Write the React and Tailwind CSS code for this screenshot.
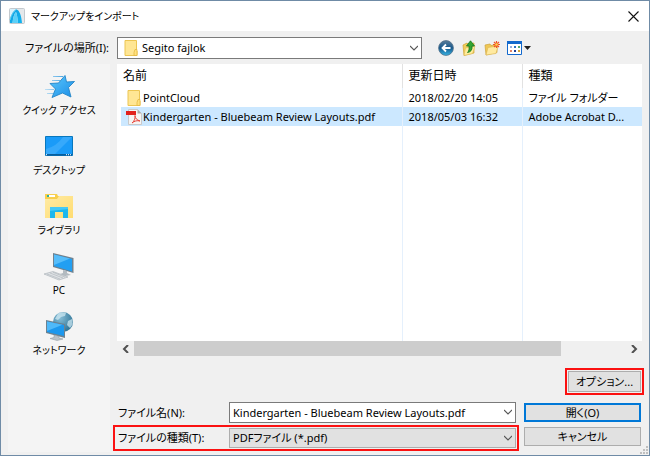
import { useState } from "react";

const files = [
  { id: 1, name: "PointCloud", date: "2018/02/20 14:05", type: "ファイル フォルダー", icon: FolderIcon },
  {
    id: 2,
    name: "Kindergarten - Bluebeam Review Layouts.pdf",
    date: "2018/05/03 16:32",
    type: "Adobe Acrobat D...",
    icon: PdfIcon,
  },
];

const places = [
  { label: "クイック アクセス", icon: StarIcon },
  { label: "デスクトップ", icon: DesktopIcon },
  { label: "ライブラリ", icon: LibraryIcon },
  { label: "PC", icon: PcIcon },
  { label: "ネットワーク", icon: NetworkIcon },
];

function AppLogo() {
  return (
    <svg className="w-4 h-4" viewBox="0 0 16 16">
      <defs>
        <linearGradient id="logo" x1="0" x2="1" y1="0" y2="1">
          <stop offset="0" stopColor="#0f9fe0" />
          <stop offset="1" stopColor="#12b4f0" />
        </linearGradient>
      </defs>
      <rect x=".5" y=".5" width="15" height="15" rx="1" fill="#e4e8eb" stroke="#c3c9ce" />
      <path d="M1 1h7C4 3 2 7 1 10z" fill="#d9f1fb" />
      <path d="M1 15V11C2.500 6 5 2 7.500 1.500 10.500 2 12.500 8 13 15H9C8.500 10 8 6 7 4 5 6 4 10 3.500 15z" fill="url(#logo)" />
      <path d="M3.500 15C4 10 5 6 7 4 8 6 8.500 10 9 15z" fill="#5bd0f8" />
      <path d="M1 12C2.500 7 4.500 3 7.500 1.500" fill="none" stroke="#5fd2f8" strokeWidth="1" />
    </svg>
  );
}

function FolderIcon() {
  return (
    <svg className="w-4 h-4 shrink-0" viewBox="0 0 16 16">
      <path d="M2 .5h11.500v10.500h.5v4.500H2z" fill="#ffe694" stroke="#ecc552" />
      <path d="M12 9.500h2v6h-3v-3z" fill="#ffe27e" stroke="#e5b842" strokeWidth=".8" />
    </svg>
  );
}

function PdfIcon() {
  return (
    <svg className="w-4 h-4 shrink-0" viewBox="0 0 16 16">
      <path d="M2.500.5h9l4 4v11h-13z" fill="#f6f4f3" stroke="#c9c9c9" />
      <path d="M11.500.5v4h4z" fill="#a9a9a9" />
      <path d="M0 2h10v4H0z" fill="#e2211c" />
      <path d="M6 14c2-1.500 3.500-4.500 3-7.500 0 3 2 4.500 5 5.500-3-.8-5.500 0-8 2z" fill="none" stroke="#e8463c" />
    </svg>
  );
}

function StarIcon() {
  return (
    <svg className="w-8 h-8" viewBox="0 0 32 32">
      <defs>
        <linearGradient id="star" x1="0" y1="0" x2="1" y2="1">
          <stop offset="0" stopColor="#5cc8fc" />
          <stop offset="1" stopColor="#1a8ce6" />
        </linearGradient>
        <linearGradient id="trail" x1="0" x2="1">
          <stop offset="0" stopColor="#bfe0f4" />
          <stop offset="1" stopColor="#4ba6e2" />
        </linearGradient>
      </defs>
      <path d="M10 6h10v1H10zM9 10h8v1H9zM2 19h9v1H2zM4 23h6v1H4z" fill="url(#trail)" />
      <path d="M22 5.500l1.500 6.500 8-.5-6 6 2.500 9.500-8.500-4-10.500 4.500 3.500-8.500-5.500-5.500 8.500-.5z" fill="url(#star)" stroke="#2384c7" strokeWidth=".9" strokeLinejoin="round" />
    </svg>
  );
}

function DesktopIcon() {
  return (
    <svg className="w-8 h-8" viewBox="0 0 32 32">
      <path d="M2.500 6.500h27v19h-27z" fill="#1a9bf8" stroke="#0877bd" />
      <path d="M20 7h9L12 24H3V19q11-3 17-12z" fill="#36a9fb" />
      <path d="M3 24h26v1.500H3z" fill="#075d9c" />
      <path d="M3 24.700h1M23 24.700h1M25 24.700h1M27 24.700h1" stroke="#fff" />
    </svg>
  );
}

function LibraryIcon() {
  return (
    <svg className="w-8 h-8" viewBox="0 0 32 32">
      <defs>
        <linearGradient id="lib" x1="0" y1="0" x2="1" y2="1">
          <stop offset="0" stopColor="#ffebA5" />
          <stop offset="1" stopColor="#ffdc70" />
        </linearGradient>
      </defs>
      <path d="M2 4h12l1 2h15v22H2z" fill="#f8cf4d" />
      <path d="M2 9h12l2-3h14v22H2z" fill="url(#lib)" />
      <path d="M4 5h8v2H4z" fill="#fff" />
      <path d="M4 5h2v2H4z" fill="#28b2a5" />
      <path d="M7 28V17h18v11h-5v-6h-8v6z" fill="#1cb7ee" />
      <path d="M7 17h18v2L7 21z" fill="#45c9f6" />
    </svg>
  );
}

function PcIcon() {
  return (
    <svg className="w-8 h-8" viewBox="0 0 32 32">
      <path d="M10 3l20.500 5v15L10 17z" fill="#70818e" />
      <path d="M11 4.500L29 9v12.500L11 16z" fill="#229ff2" />
      <path d="M11 4.500L27 8.500 11 15z" fill="#56bdfa" />
      <path d="M20 20l4 1v2l4 2-6 1-5-2 3-1z" fill="#b3bbc1" />
      <path d="M1 24l9-2.500L25 27l-9 3z" fill="#dfe2e5" stroke="#a5adb3" strokeWidth=".6" />
      <path d="M4 24l13 5M7 23l13 5M10 22.300l12 4.800" stroke="#a9b1b7" strokeWidth=".6" />
    </svg>
  );
}

function NetworkIcon() {
  return (
    <svg className="w-8 h-8" viewBox="0 0 32 32">
      <defs>
        <radialGradient id="globe" cx=".35" cy=".3" r=".8">
          <stop offset="0" stopColor="#86bdd6" />
          <stop offset="1" stopColor="#276d90" />
        </radialGradient>
      </defs>
      <circle cx="20" cy="12" r="10" fill="url(#globe)" />
      <path d="M15 3.500q4-2 8-.5l-1 3-4 1-3 3-3-1zM25 11l4-2q2 5-2 9l-3-3z" fill="#d4edf5" opacity=".7" />
      <path d="M3 10l19 4v14L3 23z" fill="#6d8290" />
      <path d="M4 11.500l17 3.500v11L4 22z" fill="#1c98ee" />
      <path d="M4 11.500l15.500 3.300L4 21z" fill="#4fb9f9" />
      <path d="M11 25l5 1.200V28l4 1-6 1.500-7-2 4-1z" fill="#bac2c8" stroke="#89949c" strokeWidth=".5" />
    </svg>
  );
}

function BackIcon() {
  return (
    <svg className="w-4 h-4" viewBox="0 0 16 16">
      <defs>
        <linearGradient id="back" x1="0" y1="0" x2="0" y2="1">
          <stop offset="0" stopColor="#5b7d99" />
          <stop offset=".5" stopColor="#17588c" />
          <stop offset="1" stopColor="#36b5e6" />
        </linearGradient>
      </defs>
      <circle cx="8" cy="8" r="7.400" fill="url(#back)" stroke="#526f88" strokeWidth=".8" />
      <path d="M12.500 8H5M8 4.500L4.500 8 8 11.500" fill="none" stroke="#fff" strokeWidth="1.800" />
    </svg>
  );
}

function UpIcon() {
  return (
    <svg className="w-4 h-4" viewBox="0 0 16 16">
      <path d="M2 5l4-2 1 1 6-1v10L3 15.500z" fill="#f1cd5c" stroke="#d0a22f" strokeWidth=".7" />
      <path d="M4.500 8L14 6l-2.500 7.500L3 15.500z" fill="#ffed9d" stroke="#dcb653" strokeWidth=".5" />
      <path d="M6.500 12.500c3.500-.5 5-3 4.500-6.500h2.500L9.500.8 5.500 6H8c.3 3 0 5-1.500 6.500z" fill="#33a532" stroke="#16761f" strokeWidth=".8" />
    </svg>
  );
}

function NewFolderIcon() {
  return (
    <svg className="w-4 h-4" viewBox="0 0 16 16">
      <path d="M1 5l5-1 1 1.500 6-1v8L2 15z" fill="#efc755" stroke="#cfa33b" strokeWidth=".7" />
      <path d="M4 7.500L14 6l-2 7.500L2 15z" fill="#ffeaa0" stroke="#dcb653" strokeWidth=".6" />
      <path d="M12.500 1v7M9 4.500h7M10 2l5 5M15 2l-5 5" stroke="#ef5527" strokeWidth="1.200" />
      <circle cx="12.500" cy="4.500" r="1.300" fill="#ffd24d" />
    </svg>
  );
}

function ViewIcon() {
  return (
    <svg className="w-6 h-4" viewBox="0 0 24 16">
      <path d="M.5 1.500h14v13H.5z" fill="#fff" stroke="#1269cd" />
      <path d="M0 1h15v3H0z" fill="#1269cd" />
      <path d="M3 6h2v2H3z" fill="#9aafe0" />
      <path d="M7 6h2v2H7z" fill="#2a73c6" />
      <path d="M11 6h2v2h-2z" fill="#55a96c" />
      <path d="M3 10h2v2H3z" fill="#e38366" />
      <path d="M7 10h2v2H7z" fill="#203f96" />
      <path d="M11 10h2v2h-2z" fill="#d5a336" />
      <path d="M17 6h7l-3.500 4z" fill="#222" />
    </svg>
  );
}

function Chevron() {
  return (
    <svg className="w-2 h-2" viewBox="0 0 8 8" fill="none" stroke="#555" strokeWidth="1.100">
      <path d="M0 2l4 4 4-4" />
    </svg>
  );
}

function ScrollArrow({ d, label }) {
  return (
    <button aria-label={label} className="w-[17px] h-[15px] flex items-center justify-center">
      <svg className="w-2 h-2" viewBox="0 0 8 8" fill="none" stroke="#505050" strokeWidth="2">
        <path d={d} />
      </svg>
    </button>
  );
}

const toolButtons = [
  { label: "戻る", icon: BackIcon },
  { label: "上へ", icon: UpIcon },
  { label: "新しいフォルダー", icon: NewFolderIcon },
  { label: "表示", icon: ViewIcon },
];

export default function App() {
  const [selected, setSelected] = useState(2);
  const [fileName, setFileName] = useState(files[1].name);

  return (
    <div className="min-h-screen flex flex-col bg-[#f0f0f0] border border-[#6f8ba6] text-black text-[11px] leading-4 font-['Noto_Sans','Noto_Sans_CJK_JP',sans-serif] [font-feature-settings:'palt']">
      {/* Title bar */}
      <header className="h-[30px] shrink-0 bg-white flex items-center px-2">
        <AppLogo />
        <h1 className="ml-[6px] text-[10px]">マークアップをインポート</h1>
        <button aria-label="閉じる" className="ml-auto w-4 h-4 flex items-center justify-center">
          <svg className="w-[11px] h-[11px]" viewBox="0 0 11 11" stroke="#111" strokeWidth="1.100">
            <path d="M.5.5l10 10M10.500.5l-10 10" />
          </svg>
        </button>
      </header>

      {/* Location bar */}
      <div className="h-[33px] shrink-0 flex items-center pr-2">
        <label htmlFor="location" className="w-[116px] shrink-0 pr-2 text-right">
          ファイルの場所(I):
        </label>
        <div className="relative w-[305px]">
          <span className="absolute left-[6px] top-[3px] pointer-events-none">
            <FolderIcon />
          </span>
          <select id="location" className="block appearance-none w-full h-[22px] pl-6 pr-5 bg-white border border-[#7a7a7a]">
            <option>Segito fajlok</option>
          </select>
          <span className="absolute right-1 top-[7px] pointer-events-none">
            <Chevron />
          </span>
        </div>
        <div className="ml-4 flex items-center gap-[7px]">
          {toolButtons.map(({ label, icon: Icon }) => (
            <button key={label} aria-label={label}>
              <Icon />
            </button>
          ))}
        </div>
      </div>

      <div className="flex-1 flex">
        {/* Places */}
        <nav className="w-[102px] shrink-0 ml-[7px] mb-[3px] pt-[6px] bg-[#f4f4f4] flex flex-col gap-3">
          {places.map(({ label, icon: Icon }) => (
            <button key={label} className="flex flex-col items-center text-[10px]">
              <Icon />
              <span>{label}</span>
            </button>
          ))}
        </nav>

        <main className="flex-1 min-w-0 pl-[3px] flex flex-col">
          {/* File list */}
          <div className="flex-1 ml-1 mr-[7px] bg-white flex flex-col">
            <table className="flex-1 w-full table-fixed border-collapse text-left whitespace-nowrap">
              <colgroup>
                <col className="w-1" />
                <col />
                <col className="w-[120px]" />
                <col className="w-[120px]" />
              </colgroup>
              <thead className="text-[12px]">
                <tr className="h-6">
                  <th></th>
                  <th className="pl-[2px] font-normal">名前</th>
                  <th className="pl-[6px] font-normal border-l border-[#e2e2e2]">更新日時</th>
                  <th className="pl-[6px] font-normal border-l border-[#e2e2e2]">種類</th>
                </tr>
              </thead>
              <tbody>
                {files.map(({ id, name, date, type, icon: Icon }) => {
                  const bg = id === selected ? "bg-[#cce8ff]" : "";
                  return (
                    <tr key={id} className="h-[19px]" onClick={() => setSelected(id)}>
                      <td></td>
                      <td className={`pl-[5px] ${bg}`}>
                        <div className="flex items-center gap-[1px]">
                          <Icon />
                          <span>{name}</span>
                        </div>
                      </td>
                      <td className={`pl-[6px] border-l border-[#e5f0fc] ${bg}`}>{date}</td>
                      <td className={`pl-[6px] border-l border-[#e5f0fc] ${bg}`}>{type}</td>
                    </tr>
                  );
                })}
                <tr className="h-[215px]">
                  <td></td>
                  <td></td>
                  <td className="border-l border-[#e5f0fc]"></td>
                  <td className="border-l border-[#e5f0fc]"></td>
                </tr>
              </tbody>
            </table>
            <div className="h-[15px] bg-[#f0f0f0] flex items-center">
              <ScrollArrow label="左へスクロール" d="M6 0L2 4l4 4" />
              <div className="flex-1">
                <div className="w-[87%] h-[15px] bg-[#cdcdcd]"></div>
              </div>
              <ScrollArrow label="右へスクロール" d="M2 0l4 4-4 4" />
            </div>
          </div>

          <div className="mt-3 mr-[5px] flex justify-end">
            <div className="border-2 border-[#fb1111] p-[1px]">
              <button className="block w-[73px] h-[21px] bg-[#e1e1e1] border border-[#adadad]">オプション...</button>
            </div>
          </div>

          {/* File name and type */}
          <div className="mt-[7px] mb-1 mr-2 flex gap-[5px]">
            <div className="flex-1 min-w-0">
              <div className="flex items-center px-[3px]">
                <label htmlFor="filename" className="w-[113px] shrink-0 pl-[2px]">
                  ファイル名(N):
                </label>
                <div className="relative flex-1">
                  <input
                    id="filename"
                    value={fileName}
                    onChange={(e) => setFileName(e.target.value)}
                    className="block w-full h-[21px] pl-[3px] pr-5 bg-white border border-[#7a7a7a]"
                  />
                  <button aria-label="履歴" className="absolute right-1 top-[6px]">
                    <Chevron />
                  </button>
                </div>
              </div>
              <div className="mt-[2px] flex items-center border-2 border-[#fb1111] p-[1px]">
                <label htmlFor="filetype" className="w-[113px] shrink-0 pl-[2px]">
                  ファイルの種類(T):
                </label>
                <div className="relative flex-1">
                  <select id="filetype" className="block appearance-none w-full h-[20px] pl-[3px] pr-5 bg-[#e1e1e1] border border-[#adadad]">
                    <option>PDFファイル (*.pdf)</option>
                  </select>
                  <span className="absolute right-1 top-[6px] pointer-events-none">
                    <Chevron />
                  </span>
                </div>
              </div>
            </div>
            <div className="w-[117px] flex flex-col gap-[5px] pt-[1px]">
              <button className="h-[19px] bg-[#e1e1e1] border-2 border-[#0078d7] leading-[14px]">開く(O)</button>
              <button className="h-[19px] bg-[#e1e1e1] border border-[#adadad]">キャンセル</button>
            </div>
          </div>
        </main>
      </div>

      {/* Resize grip */}
      <svg className="absolute right-[2px] bottom-[2px] w-2 h-2" viewBox="0 0 8 8" fill="#bfbfbf">
        <path d="M6 0h2v2H6zM3 3h2v2H3zM6 3h2v2H6zM0 6h2v2H0zM3 6h2v2H3zM6 6h2v2H6z" />
      </svg>
    </div>
  );
}
